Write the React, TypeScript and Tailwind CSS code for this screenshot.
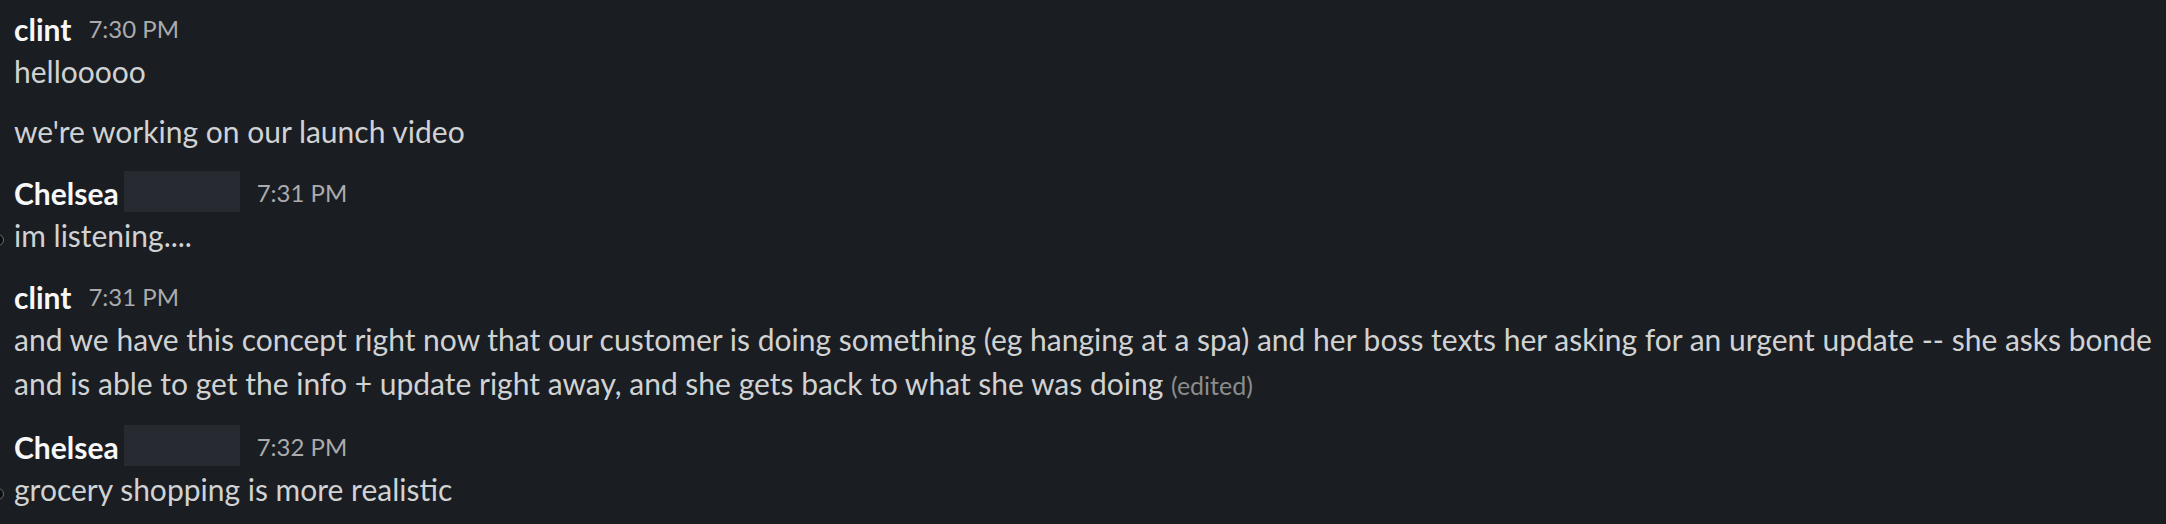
import React from "react";

function Dot() {
  return (
    <span className="absolute left-[-22px] top-[21px] h-[12px] w-[12px] rounded-full border border-[#6b6d70] bg-[#0b0c0e]" />
  );
}

function Header({ name, time, redacted }: { name: string; time: string; redacted?: boolean }) {
  return (
    <div className="flex h-[44px] items-center leading-[44px]">
      <span className="relative top-[2px] text-[30px] font-bold text-[#f8f8f8]">{name}</span>
      {redacted && <span className="ml-[5px] h-[41px] w-[116px] bg-[#272a31]" />}
      <span className="relative top-[2px] ml-[17px] text-[24px] text-[#ababad]">{time}</span>
    </div>
  );
}

function Body({ children, dot }: { children: React.ReactNode; dot?: boolean }) {
  return (
    <div className="relative text-[30px] leading-[44px] text-[#d1d2d3]">
      {dot && <Dot />}
      {children}
    </div>
  );
}

export default function App() {
  return (
    <div
      className="h-[524px] w-[2166px] overflow-hidden bg-[#1a1d21] pl-[14px] pr-[8px] pt-[5px]"
      style={{ fontFamily: "Lato, 'Noto Sans', sans-serif" }}
    >
      <div className="flex flex-col gap-[16px]">
        <div>
          <Header name="clint" time="7:30 PM" />
          <Body>hellooooo</Body>
        </div>
        <Body>we're working on our launch video</Body>
        <div>
          <Header name="Chelsea" time="7:31 PM" redacted />
          <Body dot>im listening....</Body>
        </div>
        <div>
          <Header name="clint" time="7:31 PM" />
          <Body>
            and we have this concept right now that our customer is doing something (eg hanging at a spa) and her boss
            texts her asking for an urgent update -- she asks bonde and is able to get the info + update right away, and
            she gets back to what she was doing{" "}
            <span className="text-[25px] text-[#8b8c8e]">(edited)</span>
          </Body>
        </div>
        <div>
          <Header name="Chelsea" time="7:32 PM" redacted />
          <Body dot>grocery shopping is more realistic</Body>
        </div>
      </div>
    </div>
  );
}
